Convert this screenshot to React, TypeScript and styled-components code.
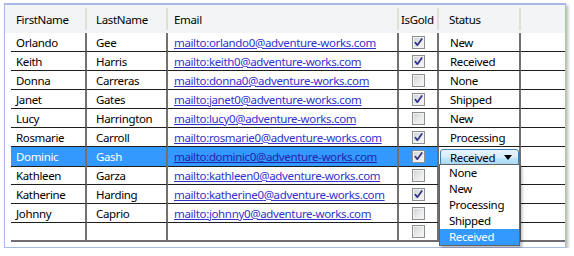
import React from 'react';
import styled, { createGlobalStyle } from 'styled-components';

const Global = createGlobalStyle`
  html, body { margin: 0; padding: 0; background: #ffffff; }
  body {
    font-family: "Noto Sans", "Open Sans", sans-serif;
    font-size: 11.5px;
    letter-spacing: -0.35px;
    color: #000;
  }
`;

const COLS = '6px 76px 81px 231px 40px 82px 44px';
const PADS = [0, 5, 9, 6, 0, 11, 0];

const Frame = styled.div`
  position: relative;
  margin: 3px 0 0 4px;
  width: 560px;
  height: 242px;
  border: 1px solid #a9b9e6;
  border-top: 2px solid #a9b9e6;
  background: #ffffff;
  box-shadow: 2px 2px 3px rgba(0, 0, 0, 0.28);
`;

const HeaderRow = styled.div`
  display: grid;
  grid-template-columns: ${COLS};
  height: 28px;
  background: #f3f4f6;
`;

const HeaderCell = styled.div<{ $pad: number; $sep: boolean }>`
  position: relative;
  display: flex;
  align-items: center;
  padding-left: ${(p) => p.$pad}px;
  white-space: nowrap;
  &::after {
    content: '';
    display: ${(p) => (p.$sep ? 'block' : 'none')};
    position: absolute;
    right: 0;
    top: 3px;
    bottom: 3px;
    width: 2px;
    background: #e1ded2;
  }
`;

const Row = styled.div`
  display: grid;
  grid-template-columns: ${COLS};
  height: 19px;
`;

const Cell = styled.div<{ $pad: number; $line: boolean; $sel?: boolean; $last?: boolean; $center?: boolean }>`
  position: relative;
  box-sizing: border-box;
  display: flex;
  align-items: center;
  justify-content: ${(p) => (p.$center ? 'center' : 'flex-start')};
  padding-left: ${(p) => p.$pad}px;
  white-space: nowrap;
  border-bottom: ${(p) => (p.$last ? '2px solid #6e6e6e' : '1px solid #1e1e1e')};
  border-right: ${(p) => (p.$line ? '2px solid #717171' : 'none')};
  background: ${(p) => (p.$sel ? '#3399ff' : 'transparent')};
  color: ${(p) => (p.$sel ? '#ffffff' : '#000000')};
`;

const RowHead = styled.div``;

const Link = styled.span<{ $sel?: boolean }>`
  color: ${(p) => (p.$sel ? '#2323a8' : '#3232cc')};
  text-decoration: underline;
`;

const Check = styled.span`
  position: relative;
  display: inline-block;
  width: 13px;
  height: 13px;
  box-sizing: border-box;
  border: 1px solid #8e8f8f;
  background: linear-gradient(135deg, #cdd0d4 0%, #e9eaeb 55%, #f7f7f7 100%);
  box-shadow: inset 0 0 0 1px #f2f2f2;
  svg { position: absolute; left: 0; top: 0; }
`;

const Combo = styled.div`
  box-sizing: border-box;
  display: flex;
  align-items: center;
  justify-content: space-between;
  width: 79px;
  height: 17px;
  margin: 2px 0 0 1px;
  align-self: flex-start;
  padding: 0 6px 0 9px;
  border: 1px solid #3c7fb1;
  border-radius: 3px;
  background: linear-gradient(#e6f4fc 0%, #d5ecfb 50%, #bee6fd 51%, #a7d9f5 100%);
  color: #000;
`;

const Drop = styled.div`
  position: absolute;
  z-index: 10;
  top: 17px;
  left: 0;
  width: 81px;
  box-sizing: border-box;
  border: 1px solid #646464;
  background: #ffffff;
  box-shadow: 2px 2px 3px rgba(0, 0, 0, 0.3);
`;

const DropItem = styled.div<{ $active?: boolean }>`
  height: 16px;
  line-height: 16px;
  padding-left: 9px;
  color: ${(p) => (p.$active ? '#ffffff' : '#000000')};
  background: ${(p) => (p.$active ? '#3399ff' : 'transparent')};
`;

type Person = { first: string; last: string; email: string; gold: boolean; status: string };

const people: Person[] = [
  { first: 'Orlando', last: 'Gee', email: 'orlando0', gold: true, status: 'New' },
  { first: 'Keith', last: 'Harris', email: 'keith0', gold: true, status: 'Received' },
  { first: 'Donna', last: 'Carreras', email: 'donna0', gold: false, status: 'None' },
  { first: 'Janet', last: 'Gates', email: 'janet0', gold: true, status: 'Shipped' },
  { first: 'Lucy', last: 'Harrington', email: 'lucy0', gold: false, status: 'New' },
  { first: 'Rosmarie', last: 'Carroll', email: 'rosmarie0', gold: true, status: 'Processing' },
  { first: 'Dominic', last: 'Gash', email: 'dominic0', gold: true, status: 'Received' },
  { first: 'Kathleen', last: 'Garza', email: 'kathleen0', gold: false, status: '' },
  { first: 'Katherine', last: 'Harding', email: 'katherine0', gold: true, status: '' },
  { first: 'Johnny', last: 'Caprio', email: 'johnny0', gold: false, status: '' },
];

const headers = ['', 'FirstName', 'LastName', 'Email', 'IsGold', 'Status', ''];
const HEAD_PADS = [0, 5, 9, 6, 2, 10, 0];
const options = ['None', 'New', 'Processing', 'Shipped', 'Received'];

const CheckBox: React.FC<{ checked: boolean }> = ({ checked }) => (
  <Check>
    {checked && (
      <svg width="11" height="11" viewBox="0 0 11 11">
        <path d="M2.3 5.6 L4.3 8.2 L8.8 2" fill="none" stroke="#2e2f8a" strokeWidth="1.7" strokeLinecap="round" strokeLinejoin="round" />
      </svg>
    )}
  </Check>
);

const Arrow = () => (
  <svg width="8" height="5" viewBox="0 0 8 5">
    <polygon points="0,0 8,0 4,5" fill="#000" />
  </svg>
);

export default function App() {
  return (
    <>
      <Global />
      <Frame>
        <HeaderRow>
          {headers.map((h, i) => (
            <HeaderCell key={i} $pad={HEAD_PADS[i]} $sep={i >= 1 && i <= 5}>
              {h}
            </HeaderCell>
          ))}
        </HeaderRow>
        {people.map((p) => {
          const sel = p.first === 'Dominic';
          return (
            <Row key={p.first}>
              <RowHead />
              <Cell $pad={PADS[1]} $line $sel={sel}>{p.first}</Cell>
              <Cell $pad={PADS[2]} $line $sel={sel}>{p.last}</Cell>
              <Cell $pad={PADS[3]} $line $sel={sel}>
                <Link $sel={sel}>mailto:{p.email}@adventure-works.com</Link>
              </Cell>
              <Cell $pad={0} $line $sel={sel} $center>
                <CheckBox checked={p.gold} />
              </Cell>
              {sel ? (
                <Cell $pad={0} $line>
                  <Combo>
                    <span>{p.status}</span>
                    <Arrow />
                  </Combo>
                  <Drop>
                    {options.map((o) => (
                      <DropItem key={o} $active={o === p.status}>{o}</DropItem>
                    ))}
                  </Drop>
                </Cell>
              ) : (
                <Cell $pad={PADS[5]} $line>{p.status}</Cell>
              )}
              <Cell $pad={0} $line={false} />
            </Row>
          );
        })}
        <Row>
          <RowHead />
          <Cell $pad={0} $line $last />
          <Cell $pad={0} $line $last />
          <Cell $pad={0} $line $last />
          <Cell $pad={0} $line $last $center>
            <CheckBox checked={false} />
          </Cell>
          <Cell $pad={0} $line $last />
          <Cell $pad={0} $line={false} $last />
        </Row>
      </Frame>
    </>
  );
}
